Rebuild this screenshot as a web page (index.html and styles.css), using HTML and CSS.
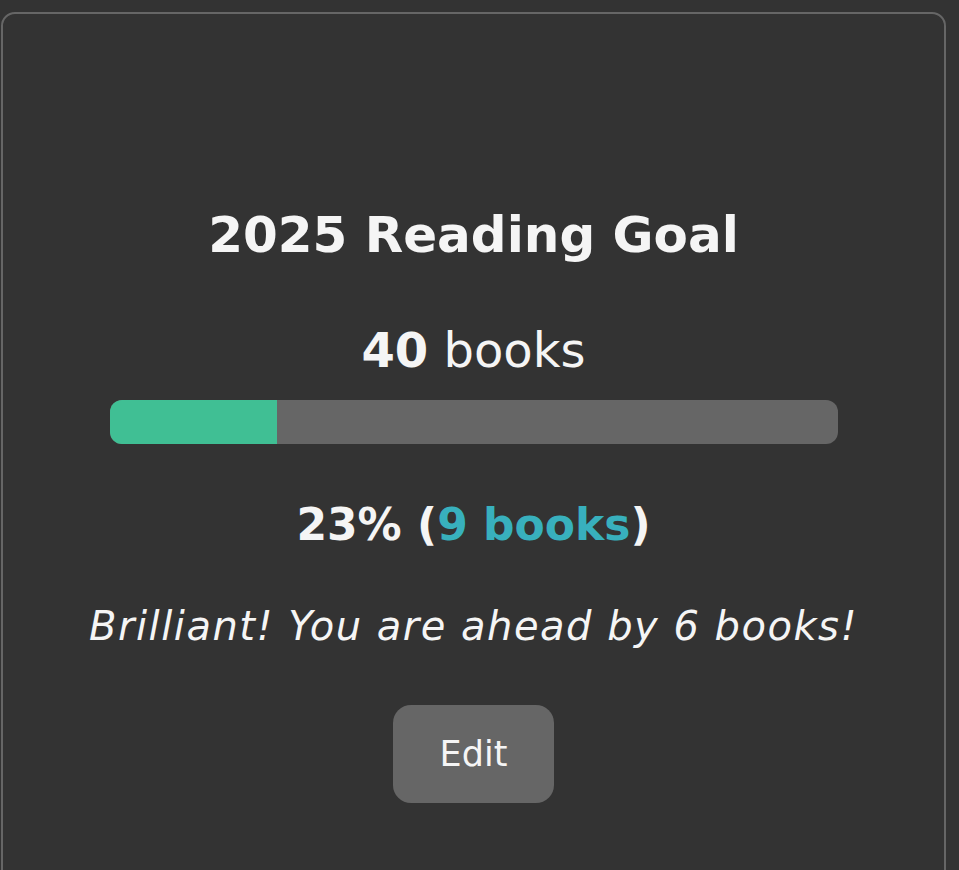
FILE: index.html
```html
<!DOCTYPE html>
<html lang="en">
  <head>
    <meta charset="UTF-8" />
    <meta name="viewport" content="width=device-width, initial-scale=1.0" />
    <title>Reading Goal</title>
    <link rel="stylesheet" href="styles.css">
  </head>
  <body>
    <div class="goal-card">
      <h2>2025 Reading Goal</h2>
      <p class="goal-count"><strong>40</strong> books</p>
      <div class="progress">
        <div class="progress-fill" style="width: 23%"></div>
      </div>
      <p class="goal-percent">23% (<span class="goal-read">9 books</span>)</p>
      <p class="goal-message">Brilliant! You are ahead by 6 books!</p>
      <button class="edit-btn">Edit</button>
    </div>
  </body>
</html>
```

FILE: styles.css
```css
body {
  margin: 0;
  padding: 12px 13px 0 1px;
  background-color: #333;
  color: #f5f5f5;
  font-family: "DejaVu Sans", sans-serif;
  overflow: hidden;
}

.goal-card {
  height: 900px;
  border: 2px solid #666;
  border-radius: 14px;
  padding-top: 186px;
  box-sizing: border-box;
  display: flex;
  flex-direction: column;
  align-items: center;
}

h2 {
  margin: 0;
  font-size: 50px;
  line-height: 70px;
  font-weight: 700;
}

.goal-count {
  margin: 50px 0 0 0;
  font-size: 48px;
  line-height: 60px;
}

.goal-count strong {
  font-weight: 700;
}

.progress {
  margin-top: 20px;
  width: 728px;
  height: 44px;
  background-color: #666;
  border-radius: 12px;
  overflow: hidden;
}

.progress-fill {
  height: 100%;
  background-color: #40bf94;
}

.goal-percent {
  margin: 51px 0 0 0;
  font-size: 44px;
  line-height: 60px;
  font-weight: 700;
}

.goal-read {
  color: #38b0bd;
}

.goal-message {
  margin: 44px 0 0 0;
  font-size: 40px;
  line-height: 54px;
  font-style: italic;
  letter-spacing: 1.5px;
}

.edit-btn {
  margin-top: 52px;
  width: 161px;
  height: 98px;
  background-color: #666;
  color: #f5f5f5;
  border: none;
  border-radius: 18px;
  font-family: "DejaVu Sans", sans-serif;
  font-size: 35px;
  cursor: pointer;
}
```
